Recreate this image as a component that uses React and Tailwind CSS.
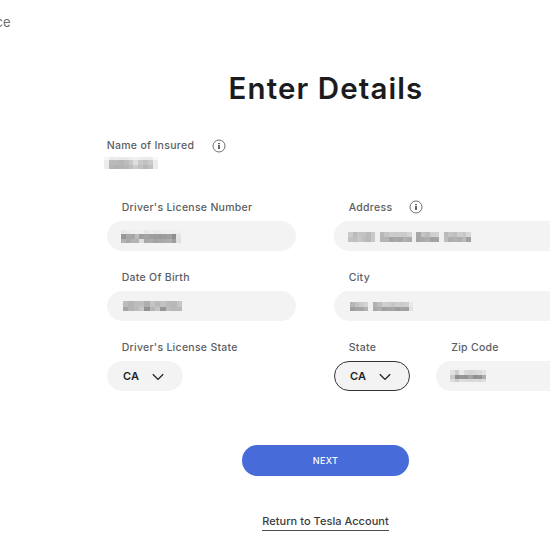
import React from "react";

// Gray level of each cell, row by row
const masks = {
  name: {
    cell: 4.9,
    heights: [3, 4.5, 4.5],
    rows: [
      [246, 234, 236, 232, 234, 240, 240, 238, 234, 236, 248],
      [236, 186, 186, 182, 188, 200, 222, 200, 194, 204, 236],
      [236, 182, 178, 180, 182, 190, 204, 194, 184, 192, 236],
    ],
  },
  license: {
    cell: 4.6,
    heights: [4, 4.6, 4.4],
    rows: [
      [234, 236, 240, 240, 240, 232, 240, 234, 236, 240, 240, 238, 240],
      [152, 168, 166, 188, 160, 164, 158, 156, 154, 156, 160, 142, 228],
      [178, 168, 178, 178, 222, 168, 174, 164, 168, 170, 174, 158, 224],
    ],
  },
  address: {
    cell: 4.55,
    heights: [5.2, 5.2],
    rows: [
      [204, 186, 196, 194, 186, 200, 240, 184, 196, 204, 202, 204, 202, 212, 240, 166, 196, 188, 208, 210, 240, 186, 196, 192, 206, 200, 216],
      [194, 190, 200, 190, 184, 200, 240, 180, 180, 164, 170, 166, 178, 172, 240, 166, 170, 176, 162, 164, 240, 190, 174, 178, 174, 186, 162],
    ],
  },
  birth: {
    cell: 5.35,
    heights: [5.5, 5.2],
    rows: [
      [188, 180, 188, 190, 174, 196, 186, 194, 186, 184, 198],
      [166, 180, 188, 200, 146, 182, 196, 150, 188, 184, 186],
    ],
  },
  city: {
    cell: 4.5,
    heights: [4.7, 4.8],
    rows: [
      [182, 194, 204, 212, 240, 178, 190, 206, 204, 198, 206, 204, 208, 232],
      [158, 166, 164, 178, 240, 170, 174, 160, 164, 166, 158, 164, 160, 226],
    ],
  },
  zip: {
    cell: 4.55,
    heights: [4.6, 4.5, 3.8],
    rows: [
      [224, 204, 234, 218, 212, 216, 220, 228],
      [202, 142, 150, 148, 164, 144, 148, 172],
      [220, 204, 222, 218, 216, 220, 216, 222],
    ],
  },
};

const MaskedValue = ({ mask, className }) => {
  const { cell, heights, rows } = mask;
  const width = cell * rows[0].length;
  const height = heights.reduce((a, b) => a + b, 0);
  let y = 0;

  return (
    <svg
      width={width}
      height={height}
      shapeRendering="crispEdges"
      className={`shrink-0 ${className}`}
      aria-hidden="true"
    >
      {rows.map((row, r) => {
        const top = y;
        y += heights[r];
        return row.map((g, i) => (
          <rect
            key={`${r}-${i}`}
            x={i * cell}
            y={top}
            width={cell}
            height={heights[r]}
            fill={`rgb(${g},${g},${g})`}
          />
        ));
      })}
    </svg>
  );
};

const InfoIcon = ({ className }) => (
  <svg
    width="14"
    height="14"
    viewBox="0 0 14 14"
    fill="none"
    className={`shrink-0 ${className}`}
  >
    <circle cx="7" cy="7" r="6" stroke="#4a4b4e" strokeWidth="0.8" />
    <path d="M7 6.1V9.9" stroke="#17181a" strokeWidth="1.3" />
    <path d="M7 4V5.2" stroke="#17181a" strokeWidth="1.3" />
  </svg>
);

const Label = ({ children, info }) => (
  <div className="flex h-5 items-center pl-[15px] text-[10.5px] font-medium tracking-[0.28px] text-[#5c5e62]">
    <span className="whitespace-nowrap">{children}</span>
    {info && <InfoIcon className="-mt-[3px] ml-[17px]" />}
  </div>
);

const Field = ({ label, mask, info, className, maskClassName }) => (
  <div className={className}>
    <Label info={info}>{label}</Label>
    <div className="mt-[3px] flex h-[30px] items-center rounded-full bg-[#f3f3f3]">
      <MaskedValue mask={mask} className={maskClassName} />
    </div>
  </div>
);

const StateSelect = ({ label, active }) => (
  <div className="w-[76px] shrink-0">
    <Label>{label}</Label>
    <button
      type="button"
      className={`mt-[3px] flex h-[30px] w-full items-center rounded-full border bg-[#f3f3f3] pt-px pl-[15px] text-[11px] font-semibold tracking-[0.2px] text-[#222326] ${
        active ? "border-[#333436]" : "border-[#f3f3f3]"
      }`}
    >
      <span className="w-[17px]">CA</span>
      <svg width="12" height="8" viewBox="0 0 12 8" fill="none" className="ml-[12.5px]">
        <path d="M0.8 1.2L6 6.4L11.2 1.2" stroke="#222326" strokeWidth="1.3" />
      </svg>
    </button>
  </div>
);

const App = () => {
  return (
    <div className="h-[550px] w-full overflow-hidden bg-white font-['Inter',sans-serif]">
      <div className="w-[651px]">
        <header className="-ml-[4.5px] flex h-[46px] items-center text-[13px] text-[#6c6e72]">
          <span>ce</span>
        </header>

        <main>
          <h1 className="mt-[21px] pl-px text-center text-[29.5px] leading-[42px] font-[560] tracking-[1.1px] text-[#1b1c20]">
            Enter Details
          </h1>

          <form className="mt-[27px] ml-[106.7px]">
            <div className="flex h-5 items-center text-[10.5px] font-medium tracking-[0.3px] text-[#5c5e62]">
              <span className="whitespace-nowrap">Name of Insured</span>
              <InfoIcon className="-mt-px ml-[17.5px]" />
            </div>
            <MaskedValue mask={masks.name} className="mt-px -ml-[3px]" />

            <div className="mt-[29px] flex gap-[38px]">
              <Field
                label="Driver's License Number"
                mask={masks.license}
                className="w-[189px]"
                maskClassName="ml-[14.5px]"
              />
              <Field
                label="Address"
                info
                mask={masks.address}
                className="w-[290px] shrink-0"
                maskClassName="mt-[2px] ml-[14px]"
              />
            </div>

            <div className="mt-[17px] flex gap-[38px]">
              <Field
                label="Date Of Birth"
                mask={masks.birth}
                className="w-[189px]"
                maskClassName="ml-[16px]"
              />
              <Field
                label="City"
                mask={masks.city}
                className="w-[290px] shrink-0"
                maskClassName="mt-px ml-[16px]"
              />
            </div>

            <div className="mt-[17px] flex">
              <div className="w-[227px] shrink-0">
                <StateSelect label="Driver's License State" />
              </div>
              <StateSelect label="State" active />
              <Field
                label="Zip Code"
                mask={masks.zip}
                className="ml-[26.5px] w-[188px] shrink-0"
                maskClassName="ml-[14px]"
              />
            </div>
          </form>

          <div className="mt-[54px] flex flex-col items-center">
            <button
              type="button"
              className="h-[30.5px] w-[167px] rounded-full bg-[#476cda] text-[9px] font-medium tracking-[0.3px] text-white"
            >
              NEXT
            </button>
            <a className="mt-[37px] border-b border-[#4a4b4e] text-[11px] leading-[17px] font-medium tracking-[0.04px] text-[#393c41]">
              Return to Tesla Account
            </a>
          </div>
        </main>
      </div>
    </div>
  );
};

export default App;
